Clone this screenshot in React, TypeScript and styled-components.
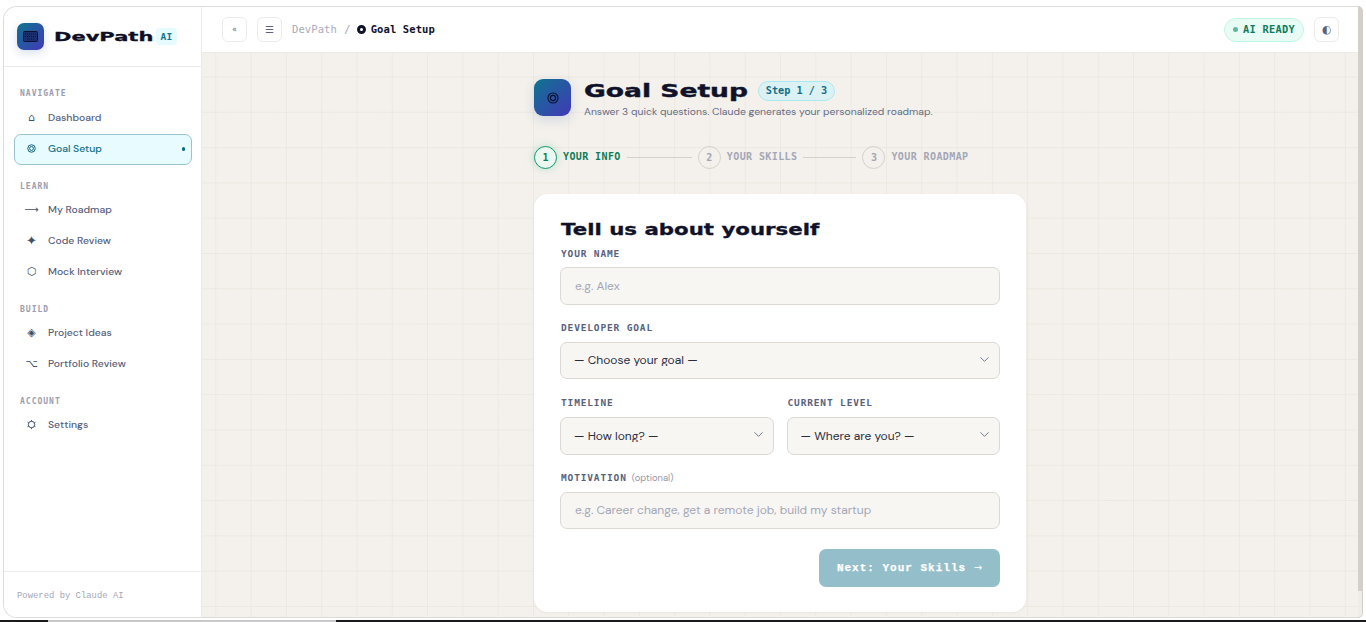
import React from "react";
import styled, { createGlobalStyle } from "styled-components";
import { ChevronDown } from "lucide-react";

const Global = createGlobalStyle`
  html, body { margin: 0; padding: 0; background: #fff; overflow: hidden; }
  * { box-sizing: border-box; }
  #root { width: 1366px; height: 622px; }
`;
const body = `"DM Sans", Lato, "Open Sans", sans-serif`;
const mono = `"DejaVu Sans Mono", "Liberation Mono", monospace`;
const wide = `"DejaVu Sans", sans-serif`;

const Page = styled.div`
  width: 1366px; height: 622px; display: flex; flex-direction: column; background: #fff;
`;
const FrameRow = styled.div`
  height: 612px; margin: 6px 3px 2px; display: flex;
`;
const Frame = styled.div`
  flex: 1; display: flex; min-width: 0; border: 1px solid #dcdcd8; border-right: 0;
  border-radius: 14px 0 0 14px; overflow: hidden; background: #fff;
`;
const Scrollbar = styled.div`
  width: 5px; background: #d3d0c9; border-radius: 0 14px 14px 0;
  border: 1px solid #d3d0c9; border-left: 0; display: flex; flex-direction: column; justify-content: flex-end;
`;
const ScrollTrack = styled.div`
  height: 26px; background: #efedea; border-radius: 0 0 12px 0;
`;
const Strip = styled.div`
  height: 2px; display: flex; margin-top: auto;
`;
const StripPart = styled.div<{ $w?: number; $light?: boolean }>`
  flex: ${p => (p.$w ? `0 0 ${p.$w}px` : "1")}; background: ${p => (p.$light ? "#c8c8c8" : "#1a1a1a")};
`;

const Sidebar = styled.aside`
  width: 198px; flex: none; display: flex; flex-direction: column; border-right: 1px solid #ebebe8; background: #fff;
`;
const Brand = styled.div`
  height: 60px; padding: 0 0 0 13px; display: flex; align-items: center; border-bottom: 1px solid #ececea; flex: none;
`;
const LogoBox = styled.div`
  width: 27px; height: 27px; border-radius: 7px; background: linear-gradient(135deg, #0e7490, #4338b8);
  display: flex; align-items: center; justify-content: center; color: #0c1030;
  box-shadow: 0 3px 10px rgba(30, 80, 160, .18); flex: none;
`;
const BrandName = styled.span`
  font: 700 12px/1 ${wide}; color: #0e0f26; display: inline-block; width: 99px; margin-left: 10px;
  transform: scaleX(1.75); transform-origin: left center; white-space: nowrap; -webkit-text-stroke: .3px #0e0f26;
`;
const AiTag = styled.span`
  margin-left: 3px; width: 21px; height: 17px; border-radius: 4px; background: #e6fbfe; color: #0e7490;
  font: 700 9.5px/17px ${mono}; text-align: center; letter-spacing: .3px;
`;
const Nav = styled.nav`
  flex: 1; padding: 21px 9px 0 10px; display: flex; flex-direction: column;
`;
const Section = styled.div<{ $first?: boolean }>`
  font: 700 8px/12px ${mono}; letter-spacing: 1px; color: #9a9db0; padding-left: 6px; height: 12px;
  margin-top: ${p => (p.$first ? "0" : "16px")}; margin-bottom: ${p => (p.$first ? "3px" : "2px")};
`;
const Item = styled.div<{ $active?: boolean }>`
  height: 31px; display: flex; align-items: center; padding-left: 1px; border-radius: 7px;
  border: 1px solid ${p => (p.$active ? "#97c4d0" : "transparent")};
  background: ${p => (p.$active ? "#e8fbfe" : "transparent")};
  color: ${p => (p.$active ? "#0e6f86" : "#56607a")};
  font: 500 10.4px/1 ${body}; position: relative;
`;
const ItemIcon = styled.span<{ $size?: number }>`
  width: 31px; margin-right: 1px; height: 14px; margin-top: -2px; text-align: center; font: 400 ${p => p.$size ?? 11}px/14px "DejaVu Sans", sans-serif; flex: none; color: #40506a;
  display: flex; align-items: center; justify-content: center;
`;
const ItemDot = styled.span`
  position: absolute; right: 6px; top: 12px; width: 3.5px; height: 3.5px; border-radius: 50%; background: #0e6f86;
`;
const SideFoot = styled.div`
  height: 46px; border-top: 1px solid #ececea; padding: 18px 0 0 13px; font: 400 8.8px/12px "Liberation Mono", monospace; color: #a4a7b8; flex: none; letter-spacing: .05px;
`;

const Main = styled.main`
  flex: 1; min-width: 0; display: flex; flex-direction: column; background-color: #f4f1ec;
`;
const Topbar = styled.header`
  height: 46px; flex: none; background: #fff; border-bottom: 1px solid #ebebe7; display: flex; align-items: center;
  padding: 0 19px 0 20px;
`;
const IconBtn = styled.div<{ $size?: number; $last?: boolean }>`
  width: 25px; height: 25px; border: 1px solid #ebebe9; border-radius: 6px; display: flex; align-items: center; justify-content: center;
  color: #5a6478; font: 400 ${p => p.$size ?? 10}px/1 "DejaVu Sans", sans-serif; flex: none; margin-right: ${p => (p.$last ? 0 : 10)}px; background: #fff;
`;
const Crumb = styled.div`
  display: flex; align-items: center; font: 400 10.5px/1 ${mono}; color: #a7aabb; letter-spacing: .1px;
`;
const CrumbSep = styled.span`
  margin: 0 6px 0 7px; color: #a7aabb; font-size: 11px;
`;
const CrumbCurrent = styled.b`
  color: #10122a; font-weight: 700; display: flex; align-items: center; gap: 5px;
`;
const CrumbDot = styled.i`
  width: 9px; height: 9px; border-radius: 50%; border: 3px solid #10122a; display: block;
`;
const Spacer = styled.div`
  flex: 1;
`;
const Ready = styled.div`
  height: 24px; width: 80px; border-radius: 12px; border: 1px solid #bff5e4; background: #e9fbf5; color: #0c7c5a;
  font: 700 10.3px/1 ${mono}; display: flex; align-items: center; gap: 5px; padding-left: 8px; letter-spacing: .3px; margin-right: 10px; white-space: nowrap;
`;
const ReadyDot = styled.i`
  width: 5px; height: 5px; border-radius: 50%; background: #5fb89a; display: block; flex: none;
`;
const Content = styled.div`
  flex: 1; min-height: 0; overflow: hidden; display: flex; justify-content: center; padding: 26px 0 0;
  background-image: linear-gradient(rgba(220, 215, 205, .32) 1px, transparent 1px), linear-gradient(90deg, rgba(220, 215, 205, .32) 1px, transparent 1px);
  background-size: 35.3px 35.3px; background-position: 13.3px 23.5px;
`;
const Column = styled.div`
  width: 492px; display: flex; flex-direction: column;
`;
const Head = styled.div`
  display: flex; height: 37px; align-items: flex-start;
`;
const HeadIcon = styled.div`
  width: 37px; height: 37px; border-radius: 9px; background: linear-gradient(135deg, #0e7490, #4338b8);
  display: flex; align-items: center; justify-content: center; flex: none;
  box-shadow: 0 4px 12px rgba(30, 80, 160, .16);
`;
const HeadText = styled.div`
  margin-left: 13px; display: flex; flex-direction: column;
`;
const TitleRow = styled.div`
  display: flex; align-items: center; height: 24px;
`;
const Title = styled.h1`
  margin: 0; font: 700 18px/24px ${wide}; color: #10122a; width: 164px; white-space: nowrap; -webkit-text-stroke: .4px #10122a;
  transform: scaleX(1.475); transform-origin: left center; display: inline-block;
`;
const StepBadge = styled.span`
  margin-left: 10px; width: 77px; height: 20px; border-radius: 10px; border: 1px solid #a9e9f1; background: #dcf1f3; color: #0e6f86;
  font: 700 10.2px/18px ${mono}; text-align: center; white-space: nowrap;
`;
const Sub = styled.p`
  margin: 1px 0 0; font: 400 10.4px/16px ${body}; color: #626c84; white-space: nowrap;
`;
const Steps = styled.div`
  display: flex; align-items: center; height: 24px; margin-top: 29px;
`;
const StepCircle = styled.span<{ $on?: boolean }>`
  width: 23px; height: 23px; border-radius: 50%; flex: none; border: 1px solid ${p => (p.$on ? "#12976e" : "#d3d1cb")};
  color: ${p => (p.$on ? "#0c7c5a" : "#a3a6b6")}; background: ${p => (p.$on ? "#ecf7f1" : "transparent")};
  box-shadow: ${p => (p.$on ? "0 0 8px rgba(20,170,120,.25)" : "none")};
  font: 700 10px/21px ${mono}; text-align: center;
`;
const StepLabel = styled.span<{ $on?: boolean }>`
  margin-left: 6px; font: 700 10px/1 ${mono}; letter-spacing: .4px; color: ${p => (p.$on ? "#0c7c5a" : "#a3a6b6")}; white-space: nowrap;
`;
const StepLine = styled.span<{ $w: number }>`
  width: ${p => p.$w}px; height: 1px; background: #d3d1cb; margin: 0 6px; flex: none;
`;
const Card = styled.form`
  margin-top: 25px; height: 418px; background: #fff; border-radius: 14px; padding: 27px 26px 0 26px;
  box-shadow: 0 1px 3px rgba(60, 50, 30, .05); display: flex; flex-direction: column; flex: none;
`;
const CardTitle = styled.h2`
  margin: 0 0 9px 1px; font: 700 15px/18px ${wide}; color: #10122a; white-space: nowrap; -webkit-text-stroke: .3px #10122a;
  transform: scaleX(1.42); transform-origin: left center;
`;
const Field = styled.div<{ $mt?: number }>`
  display: flex; flex-direction: column; flex: 1; min-width: 0; margin-top: ${p => p.$mt ?? 0}px;
`;
const Label = styled.label<{ $tight?: boolean }>`
  font: 700 9.5px/12px ${mono}; color: #58627c; letter-spacing: .85px; height: 12px; margin: 0 0 ${p => (p.$tight ? 7 : 8)}px 1px; white-space: nowrap;
`;
const Optional = styled.span`
  font: 400 9.4px/12px ${body}; letter-spacing: 0; color: #9497aa; margin-left: 5px;
`;
const Input = styled.input`
  width: 100%; height: 37.5px; border: 1px solid #dbd9d2; background: #f8f6f3; border-radius: 7px; padding: 0 14px;
  font: 400 12px/1 ${body}; color: #2a2d3e; outline: none; flex: none;
  &::placeholder { color: #a3a6b6; opacity: 1; }
`;
const SelectWrap = styled.div`
  position: relative; height: 37.5px; flex: none;
`;
const Select = styled.select`
  width: 100%; height: 100%; appearance: none; border: 1px solid #dbd9d2; background: #f8f6f3; border-radius: 7px; padding: 0 13px;
  font: 400 12px/1 ${body}; color: #2a2d3e; outline: none;
`;
const Chevron = styled.span`
  position: absolute; right: 8px; top: 10px; color: #65708c; display: flex; pointer-events: none;
`;
const TwoCols = styled.div`
  display: flex; gap: 13px; margin-top: 18px; flex: none;
`;
const Block = styled(Field)`
  flex: none;
`;
const Actions = styled.div`
  display: flex; justify-content: flex-end; margin-top: 20px;
`;
const NextBtn = styled.button`
  width: 181px; height: 38px; border: 0; border-radius: 7px; background: #94bfca; color: #fff;
  font: 700 11px/1 "Liberation Mono", monospace; letter-spacing: 1px; padding: 0; white-space: nowrap; -webkit-text-stroke: .25px #fff;
`;
const BtnArrow = styled.span`
  font: 400 10px/1 "DejaVu Sans", sans-serif; letter-spacing: 0; -webkit-text-stroke: 0;
`;

function Rings({ size, color, sw }: { size: number; color: string; sw: number }) {
  return (
    <svg width={size} height={size} viewBox="0 0 12 12" fill="none" stroke={color} strokeWidth={sw}>
      <circle cx="6" cy="6" r="5" />
      <circle cx="6" cy="6" r="2.6" />
    </svg>
  );
}

const sections: { name: string; items: { g: React.ReactNode; t: string; active?: boolean; size?: number }[] }[] = [
  { name: "NAVIGATE", items: [{ g: "⌂", t: "Dashboard" }, { g: <Rings size={9} color="#0b5f75" sw={1.3} />, t: "Goal Setup", active: true }] },
  { name: "LEARN", items: [{ g: "⟶", t: "My Roadmap", size: 10 }, { g: "✦", t: "Code Review", size: 13 }, { g: "⬡", t: "Mock Interview" }] },
  { name: "BUILD", items: [{ g: "◈", t: "Project Ideas" }, { g: "⌥", t: "Portfolio Review" }] },
  {
    name: "ACCOUNT",
    items: [{
      g: (
        <svg width="11" height="11" viewBox="0 0 11 11" fill="none" stroke="#40506a">
          <circle cx="5.5" cy="5.5" r="3.2" strokeWidth="1" />
          <path d="M5.5 .9v1.4M5.5 8.7v1.4M1.5 3.2l1.2.7M8.3 7.1l1.2.7M1.5 7.8l1.2-.7M8.3 3.9l1.2-.7" strokeWidth=".9" />
        </svg>
      ),
      t: "Settings",
    }],
  },
];

function Sel({ text }: { text: string }) {
  return (
    <SelectWrap>
      <Select defaultValue="">
        <option value="">{text}</option>
      </Select>
      <Chevron><ChevronDown size={15} strokeWidth={1.5} /></Chevron>
    </SelectWrap>
  );
}

export default function App() {
  return (
    <Page>
      <Global />
      <FrameRow>
        <Frame>
          <Sidebar>
            <Brand>
              <LogoBox>
                <svg width="15" height="11" viewBox="0 0 15 11">
                  <rect x=".5" y=".5" width="14" height="10" rx="1" fill="#1d2f6e" stroke="#0c1030" />
                  <path d="M2 3h11M2 5.5h11M4 8h7" stroke="#0c1030" strokeWidth="1" strokeDasharray="1 1" />
                </svg>
              </LogoBox>
              <BrandName>DevPath</BrandName>
              <AiTag>AI</AiTag>
            </Brand>
            <Nav>
              {sections.map((s, i) => (
                <React.Fragment key={s.name}>
                  <Section $first={i === 0}>{s.name}</Section>
                  {s.items.map(it => (
                    <Item key={it.t} $active={it.active}>
                      <ItemIcon $size={it.size}>{it.g}</ItemIcon>
                      {it.t}
                      {it.active && <ItemDot />}
                    </Item>
                  ))}
                </React.Fragment>
              ))}
            </Nav>
            <SideFoot>Powered by Claude AI</SideFoot>
          </Sidebar>
          <Main>
            <Topbar>
              <IconBtn $size={8}>«</IconBtn>
              <IconBtn>☰</IconBtn>
              <Crumb>
                DevPath<CrumbSep>/</CrumbSep>
                <CrumbCurrent><CrumbDot />Goal Setup</CrumbCurrent>
              </Crumb>
              <Spacer />
              <Ready><ReadyDot />AI READY</Ready>
              <IconBtn $last $size={11}>◐</IconBtn>
            </Topbar>
            <Content>
              <Column>
                <Head>
                  <HeadIcon><Rings size={12} color="#0c1030" sw={1.1} /></HeadIcon>
                  <HeadText>
                    <TitleRow>
                      <Title>Goal Setup</Title>
                      <StepBadge>Step 1 / 3</StepBadge>
                    </TitleRow>
                    <Sub>Answer 3 quick questions. Claude generates your personalized roadmap.</Sub>
                  </HeadText>
                </Head>
                <Steps>
                  <StepCircle $on>1</StepCircle>
                  <StepLabel $on>YOUR INFO</StepLabel>
                  <StepLine $w={65} />
                  <StepCircle>2</StepCircle>
                  <StepLabel>YOUR SKILLS</StepLabel>
                  <StepLine $w={53} />
                  <StepCircle>3</StepCircle>
                  <StepLabel>YOUR ROADMAP</StepLabel>
                </Steps>
                <Card>
                  <CardTitle>Tell us about yourself</CardTitle>
                  <Block>
                    <Label $tight>YOUR NAME</Label>
                    <Input placeholder="e.g. Alex" />
                  </Block>
                  <Block $mt={17}>
                    <Label>DEVELOPER GOAL</Label>
                    <Sel text="— Choose your goal —" />
                  </Block>
                  <TwoCols>
                    <Field>
                      <Label>TIMELINE</Label>
                      <Sel text="— How long? —" />
                    </Field>
                    <Field>
                      <Label>CURRENT LEVEL</Label>
                      <Sel text="— Where are you? —" />
                    </Field>
                  </TwoCols>
                  <Block $mt={17}>
                    <Label>MOTIVATION<Optional>(optional)</Optional></Label>
                    <Input placeholder="e.g. Career change, get a remote job, build my startup" />
                  </Block>
                  <Actions>
                    <NextBtn type="button">Next: Your Skills <BtnArrow>→</BtnArrow></NextBtn>
                  </Actions>
                </Card>
              </Column>
            </Content>
          </Main>
        </Frame>
        <Scrollbar><ScrollTrack /></Scrollbar>
      </FrameRow>
      <Strip>
        <StripPart $w={48} />
        <StripPart $w={288} $light />
        <StripPart />
      </Strip>
    </Page>
  );
}
